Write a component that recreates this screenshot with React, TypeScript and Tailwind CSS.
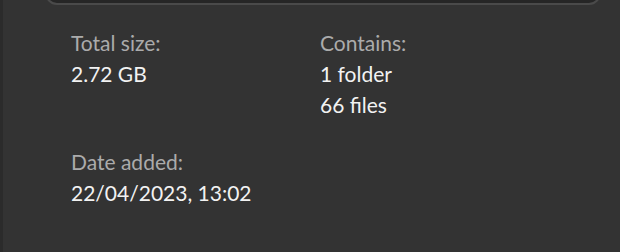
export default function App() {
  return (
    <div className="w-[620px] h-[252px] bg-[#333333] flex overflow-hidden" style={{ fontFamily: "Lato, 'Noto Sans', sans-serif" }}>
      <div className="w-[3px] h-full bg-[#2b2b2b] shrink-0" />
      <div className="flex-1 flex flex-col">
        <div className="h-[5px] overflow-hidden pl-[42px] pr-[19px]">
          <div className="h-[24px] -mt-[19px] rounded-[14px] border-2 border-[#4a4a4a] bg-[#262626]" />
        </div>
        <div className="grid grid-cols-[249px_1fr] pl-[68px] pt-[22px] text-[21px] leading-[31px]">
          <div className="flex flex-col">
            <span className="text-[#ababab]">Total size:</span>
            <span className="text-[#f2f2f2]">2.72 GB</span>
          </div>
          <div className="flex flex-col">
            <span className="text-[#ababab]">Contains:</span>
            <span className="text-[#f2f2f2]">1 folder</span>
            <span className="text-[#f2f2f2]">66 files</span>
          </div>
          <div className="flex flex-col mt-[26px]">
            <span className="text-[#ababab]">Date added:</span>
            <span className="text-[#f2f2f2]">22/04/2023, 13:02</span>
          </div>
        </div>
      </div>
    </div>
  );
}
